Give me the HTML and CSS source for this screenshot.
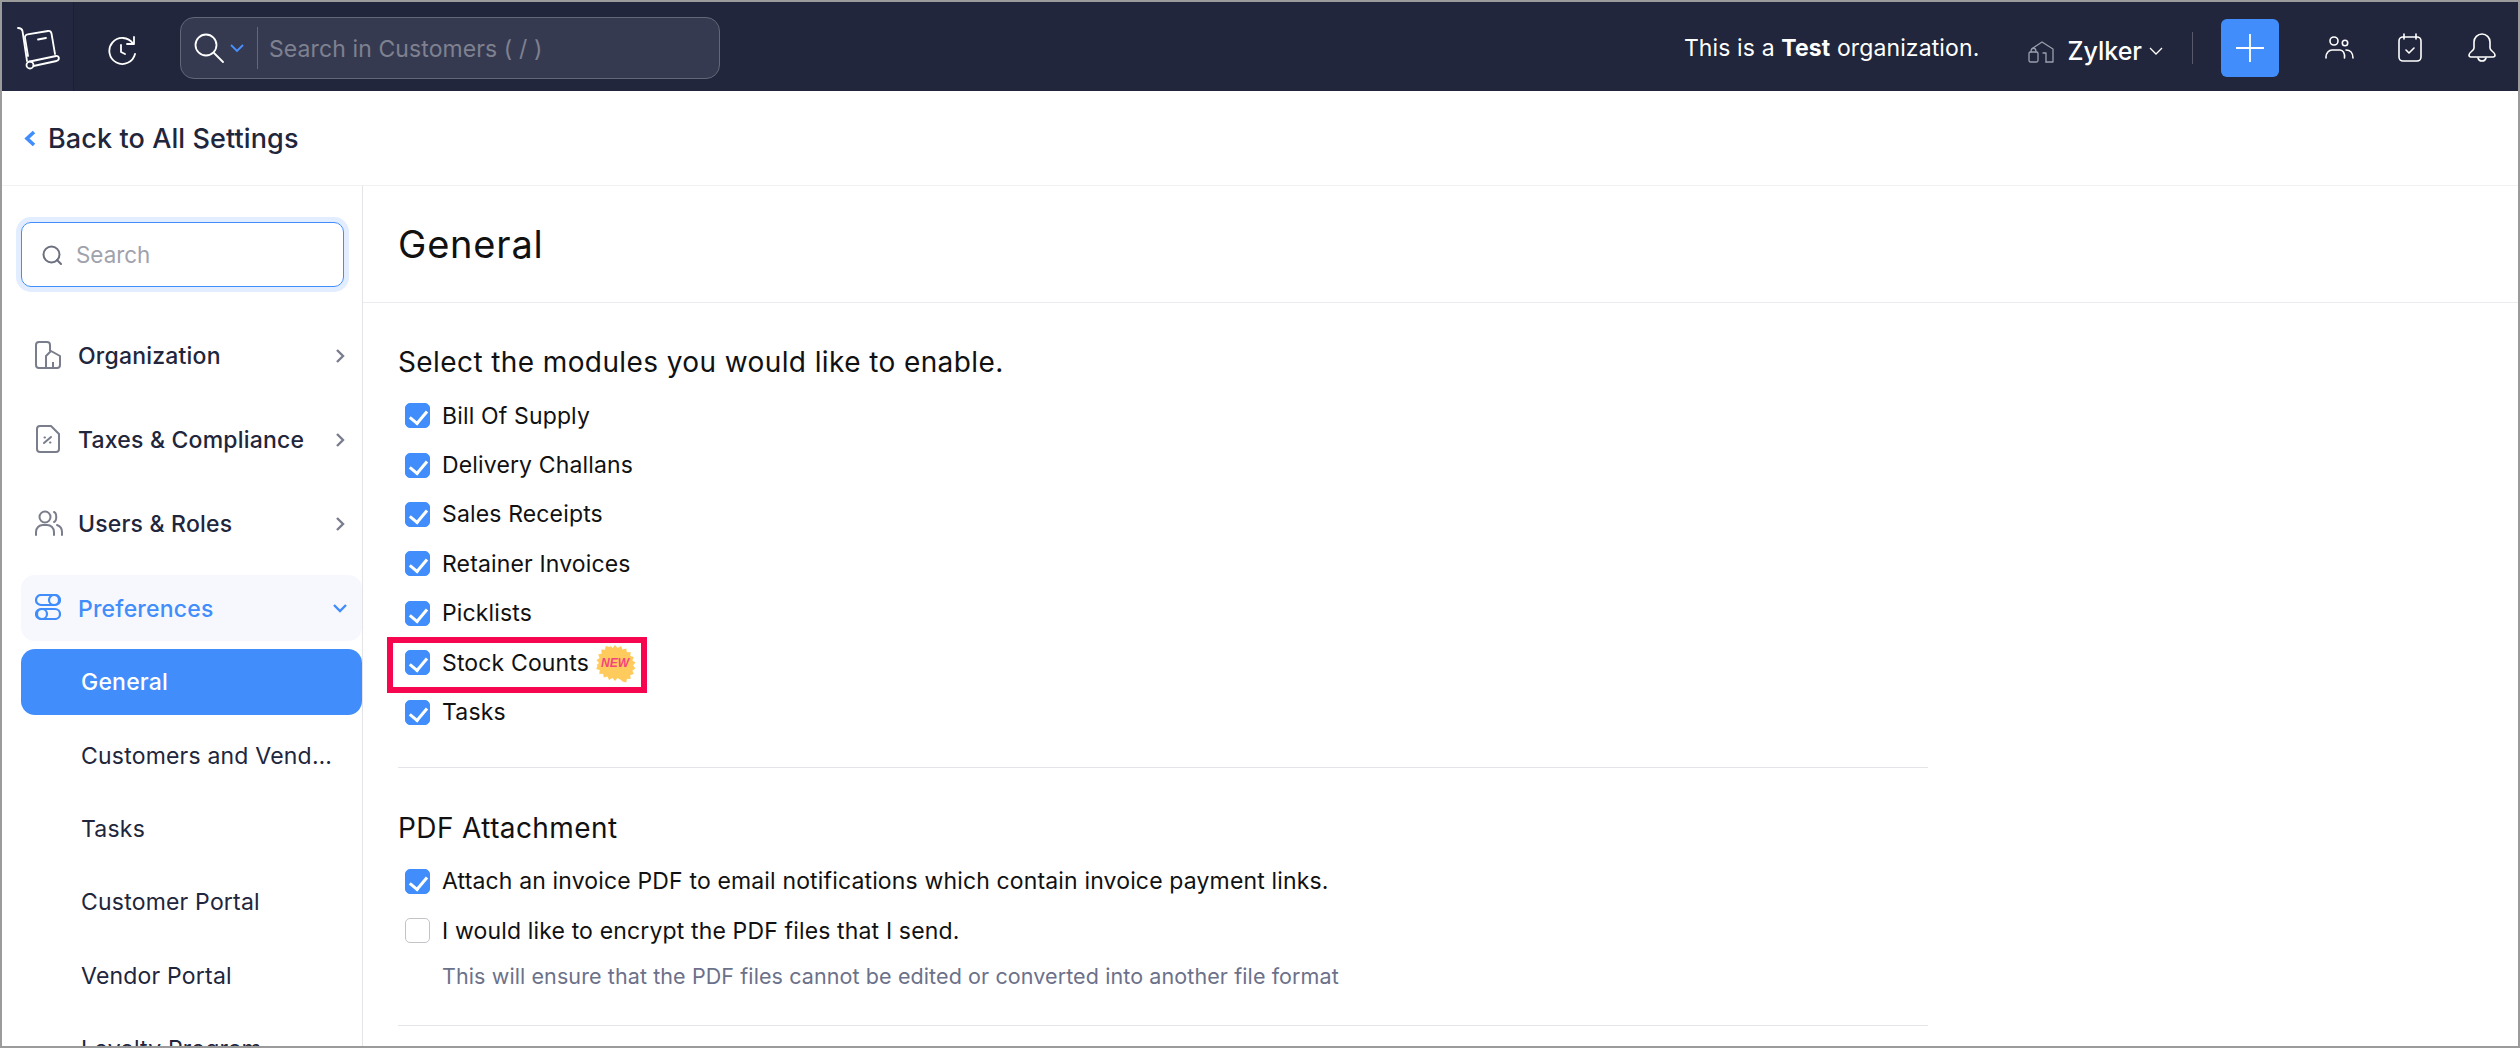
FILE: index.html
```html
<!DOCTYPE html>
<html lang="en">
<head>
<meta charset="utf-8">
<title>General Settings</title>
<link rel="stylesheet" href="styles.css">
</head>
<body>
<div class="frame">
  <header class="topbar">
    <div class="logo-cell">
      <svg width="46" height="44" viewBox="0 0 46 44" fill="none" stroke="#fff" stroke-width="1.800" stroke-linecap="round" stroke-linejoin="round"><path d="M2 2c2.500 0 4 1 4.500 3L11 35"/><circle cx="14" cy="39" r="3.500"/><path d="M14 35.500L40 30c3.500-.5 4 4 .5 5L17.500 40"/><path d="M12 30L9 12c-.3-2 1-3.500 2.500-3.700L32 5c2-.3 3 .5 3.500 2.500L39 28"/><path d="M22 13.500l8-1.500"/></svg>
    </div>
    <div class="history">
      <svg width="30" height="30" viewBox="0 0 30 30" fill="none" stroke="#fff" stroke-width="1.800" stroke-linecap="round" stroke-linejoin="round"><path d="M26 8.500A13 13 0 1 0 28 19"/><path d="M27 2v7h-7"/><path d="M14 10v7l4 2"/></svg>
    </div>
    <div class="global-search">
      <svg class="gs-lens" width="30" height="30" viewBox="0 0 30 30" fill="none" stroke="#fff" stroke-width="1.800" stroke-linecap="round"><circle cx="12" cy="12" r="10.500"/><path d="M20 20l9 9"/></svg>
      <svg class="gs-caret" width="14" height="9" viewBox="0 0 14 9" fill="none" stroke="#4a90ff" stroke-width="1.800"><path d="M1 1l6 6 6-6"/></svg>
      <span class="gs-sep"></span>
      <span class="gs-text">Search in Customers ( / )</span>
    </div>
    <div class="org-note">This is a <b>Test</b> organization.</div>
    <svg class="org-house" width="26" height="22" viewBox="0 0 26 22" fill="none" stroke="#9aa0ae" stroke-width="1.300" stroke-linejoin="round" stroke-linecap="round"><path d="M5 7l9-6 11 7v13h-7"/><rect x="1" y="11" width="9" height="10" rx="1.500"/><path d="M3 11c0-5 5-5 5 0"/><path d="M15 12h3v9"/></svg>
    <div class="org-name">Zylker</div>
    <svg class="org-caret" width="14" height="8" viewBox="0 0 14 8" fill="none" stroke="#fff" stroke-width="1.300"><path d="M1 1l6 6 6-6"/></svg>
    <span class="top-sep"></span>
    <div class="plus-btn">
      <svg width="28" height="28" viewBox="0 0 28 28" stroke="#fff" stroke-width="1.800"><path d="M14 0v28M0 14h28"/></svg>
    </div>
    <svg class="top-icon users" width="29" height="24" viewBox="0 0 29 24" fill="none" stroke="#fff" stroke-width="1.600" stroke-linecap="round"><circle cx="9" cy="5" r="4"/><circle cx="20" cy="7" r="2.700"/><path d="M1 22v-1c0-4 3-7 6-7h8c3 0 5 3 4.500 8"/><path d="M21 14c4 0 7 3 7 8"/></svg>
    <svg class="top-icon cal" width="24" height="29" viewBox="0 0 24 29" fill="none" stroke="#fff" stroke-width="1.600" stroke-linecap="round" stroke-linejoin="round"><rect x="1" y="4" width="22" height="24" rx="4"/><path d="M6 1v5M18 1v5M8 17l3 3 5-5"/></svg>
    <svg class="top-icon bell" width="28" height="30" viewBox="0 0 28 30" fill="none" stroke="#fff" stroke-width="1.600" stroke-linecap="round" stroke-linejoin="round"><path d="M6 15V9a8 8 0 0 1 16 0v6c0 3 5 4 5 7 0 1-1 2-2 2H3c-1 0-2-1-2-2 0-3 5-4 5-7z"/><path d="M10 25c1 4 7 4 8 0"/></svg>
  </header>

  <div class="backrow">
    <svg width="12" height="17" viewBox="0 0 12 17" fill="none" stroke="#408dfb" stroke-width="3.600"><path d="M10 2L3 8.500l7 6.500"/></svg>
    <span>Back to All Settings</span>
  </div>

  <div class="body-row">
    <aside class="sidebar">
      <div class="side-search">
        <svg width="20" height="20" viewBox="0 0 20 20" fill="none" stroke="#6b6f7f" stroke-width="2" stroke-linecap="round"><circle cx="9.500" cy="9.500" r="8"/><path d="M15 15l4 4"/></svg>
        <span>Search</span>
      </div>
      <nav class="nav">
        <div class="nav-item">
          <svg class="nav-icon" width="26" height="28" viewBox="0 0 26 28" fill="none" stroke="#7a7d8c" stroke-width="2" stroke-linejoin="round"><path d="M11 27H4a3 3 0 0 1-3-3V4a3 3 0 0 1 3-3h8a3 3 0 0 1 3 3v6"/><path d="M11 27V15l5-5 9 5v9a3 3 0 0 1-3 3z"/><path d="M18 27v-6"/></svg>
          <span>Organization</span>
          <svg class="nav-chev" width="9" height="14" viewBox="0 0 9 14" fill="none" stroke="#7a7d8c" stroke-width="2.400"><path d="M1 1l6 6-6 6"/></svg>
        </div>
        <div class="nav-item">
          <svg class="nav-icon" width="26" height="28" viewBox="0 0 26 28" fill="none" stroke="#7a7d8c" stroke-width="2" stroke-linejoin="round" stroke-linecap="round"><path d="M5 1h11l8 8v15a3 3 0 0 1-3 3H5a3 3 0 0 1-3-3V4a3 3 0 0 1 3-3z"/><path d="M9 18l7-6M9.500 12.500h.5M15 17.500h.5"/></svg>
          <span>Taxes &amp; Compliance</span>
          <svg class="nav-chev" width="9" height="14" viewBox="0 0 9 14" fill="none" stroke="#7a7d8c" stroke-width="2.400"><path d="M1 1l6 6-6 6"/></svg>
        </div>
        <div class="nav-item">
          <svg class="nav-icon" width="28" height="26" viewBox="0 0 28 26" fill="none" stroke="#7a7d8c" stroke-width="2" stroke-linecap="round"><circle cx="10" cy="7" r="5.500"/><path d="M19 2c3 1 3 9 0 10"/><path d="M1 25v-3c0-4 3-7 7-7h4c4 0 7 3 7 7v3"/><path d="M22 15c3 1 5 3 5 7v3"/></svg>
          <span>Users &amp; Roles</span>
          <svg class="nav-chev" width="9" height="14" viewBox="0 0 9 14" fill="none" stroke="#7a7d8c" stroke-width="2.400"><path d="M1 1l6 6-6 6"/></svg>
        </div>
        <div class="nav-item nav-open">
          <svg class="nav-icon" width="26" height="26" viewBox="0 0 26 26" fill="none" stroke="#408dfb" stroke-width="2.200"><rect x="1" y="1" width="24" height="10" rx="5"/><circle cx="19" cy="6" r="5"/><rect x="1" y="15" width="24" height="10" rx="5"/><circle cx="7" cy="20" r="5"/></svg>
          <span>Preferences</span>
          <svg class="nav-chev down" width="14" height="9" viewBox="0 0 14 9" fill="none" stroke="#408dfb" stroke-width="2.400"><path d="M1 1l6 6 6-6"/></svg>
        </div>
        <div class="sub-item sub-active">General</div>
        <div class="sub-item sub-first"><span class="ellip">Customers and Vendors</span></div>
        <div class="sub-item">Tasks</div>
        <div class="sub-item">Customer Portal</div>
        <div class="sub-item">Vendor Portal</div>
        <div class="sub-item">Loyalty Program</div>
      </nav>
    </aside>

    <main class="content">
      <div class="page-head"><h1>General</h1></div>
      <div class="page-body">
        <h2 class="sec-first">Select the modules you would like to enable.</h2>
        <label class="row"><span class="cb on"></span>Bill Of Supply</label>
        <label class="row"><span class="cb on"></span>Delivery Challans</label>
        <label class="row"><span class="cb on"></span>Sales Receipts</label>
        <label class="row"><span class="cb on"></span>Retainer Invoices</label>
        <label class="row"><span class="cb on"></span>Picklists</label>
        <label class="row"><span class="cb on"></span>Stock Counts
          <span class="badge">
            <svg width="36" height="36" viewBox="0 0 36 36"><path fill="#ffcb5c" d="M18 0l2.500 3 3.500-2 1.500 3.500 3.800-1 .6 3.800 3.800-.2-.4 3.800 3.500 1-1.400 3.500 3.100 2.100-2.500 3 2.500 3-3.100 2.100 1.400 3.500-3.500 1 .4 3.800-3.800-.2-.6 3.800-3.800-1L24 35l-3.500-2L18 36l-2.500-3-3.500 2-1.500-3.500-3.800 1-.6-3.800-3.800.2.400-3.800-3.500-1 1.400-3.500L-.5 20l2.500-2-2.500-3 3.100-2.100L1.200 9.400l3.500-1-.4-3.800 3.800.2.600-3.800 3.800 1L14 1l1.500 2z"/></svg>
            <i>NEW</i>
          </span>
          <span class="highlight"></span>
        </label>
        <label class="row"><span class="cb on"></span>Tasks</label>
        <hr class="rule rule-a">
        <h2 class="sec-pdf">PDF Attachment</h2>
        <label class="row"><span class="cb on"></span>Attach an invoice PDF to email notifications which contain invoice payment links.</label>
        <label class="row"><span class="cb"></span>I would like to encrypt the PDF files that I send.</label>
        <p class="help">This will ensure that the PDF files cannot be edited or converted into another file format</p>
        <hr class="rule rule-b">
      </div>
    </main>
  </div>
</div>
</body>
</html>
```

FILE: styles.css
```css
* { box-sizing: border-box; }
html, body { margin: 0; height: 100%; overflow: hidden; background: #fff; }
body { font-family: Inter, "Liberation Sans", sans-serif; color: #21263c; }

.frame { width: 2520px; height: 1048px; border: 2px solid #9b9b9b; overflow: hidden; display: flex; flex-direction: column; background: #fff; }

.topbar { height: 89px; flex: none; background: #21263c; display: flex; align-items: center; color: #fff; }
.logo-cell { width: 72px; height: 100%; flex: none; background: #232840; border-right: 1px solid #1c2033; border-top-left-radius: 8px; display: flex; align-items: center; padding: 3px 0 0 14px; }
.history { width: 106px; flex: none; display: flex; padding-left: 33px; margin-top: 7px; }
.global-search { width: 540px; height: 62px; flex: none; margin-top: 3px; background: #363a50; border: 1px solid #63677a; border-radius: 14px; display: flex; align-items: center; padding-left: 13px; }
.gs-lens { flex: none; }
.gs-caret { margin-left: 6px; flex: none; }
.gs-sep { width: 1px; height: 42px; background: #63677a; margin-left: 13px; }
.gs-text { margin-left: 11px; margin-top: 1px; font-size: 23px; letter-spacing: .1px; color: #7e8190; }
.org-note { margin-left: auto; font-size: 23px; letter-spacing: .12px; color: #fff; margin-top: 3px; }
.org-house { margin-left: 49px; flex: none; margin-top: 10px; }
.org-name { margin-left: 13px; font-size: 25px; font-weight: 500; margin-top: 8px; }
.org-caret { margin-left: 7px; flex: none; margin-top: 8px; }
.top-sep { width: 1px; height: 32px; background: #565a6c; margin-left: 29px; margin-top: 3px; }
.plus-btn { width: 58px; height: 58px; flex: none; border-radius: 6px; background: #408dfb; margin-left: 28px; margin-top: 3px; display: flex; align-items: center; justify-content: center; }
.top-icon { flex: none; margin-top: 2px; }
.users { margin-left: 46px; }
.cal { margin-left: 44px; }
.bell { margin-left: 46px; margin-right: 22px; }

.backrow { height: 94px; flex: none; display: flex; align-items: center; gap: 12px; padding-left: 22px; font-size: 27px; letter-spacing: .1px; font-weight: 500; }

.body-row { flex: 1; display: flex; min-height: 0; }
.sidebar { width: 361px; flex: none; border-right: 1px solid #e4e4e8; border-top: 1px solid #f2f2f4; padding-top: 36px; }
.side-search { width: 323px; height: 65px; margin-left: 19px; border: 1px solid #408dfb; border-radius: 10px; box-shadow: 0 0 0 5px #e2edff; display: flex; align-items: center; padding-left: 20px; gap: 14px; font-size: 22.400px; color: #9fa2ad; }
.nav { margin-top: 35px; }
.nav-item { height: 66px; margin: 0 0 18.400px 19px; display: flex; align-items: center; padding: 1px 0 0 15px; font-size: 23px; letter-spacing: .2px; font-weight: 500; position: relative; border-radius: 14px; }
.nav-item .nav-icon { position: absolute; left: 14px; top: 19px; }
.nav-item span { margin-left: 42px; }
.nav-chev { margin-left: auto; margin-right: 17px; }
.nav-chev.down { margin-right: 15px; }
.nav-open { background: #f6f8fd; color: #408dfb; margin-bottom: 8px; }
.sub-item { height: 66px; margin: 0 0 7.400px 19px; padding: 0 0 0 60px; display: flex; align-items: center; font-size: 23px; letter-spacing: .2px; }
.sub-active { background: #408dfb; color: #fff; font-weight: 500; border-radius: 14px; }
.ellip { display: block; width: 252px; white-space: nowrap; overflow: hidden; text-overflow: ellipsis; }

.content { flex: 1; min-width: 0; }
.page-head { height: 118px; border-top: 1px solid #f2f2f4; border-bottom: 1px solid #ececf0; display: flex; align-items: center; padding-left: 35px; }
h1 { margin: 0; font-size: 38px; letter-spacing: .8px; font-weight: 400; color: #111; }
.page-body { padding-left: 35px; width: 1566px; }
h2 { margin: 0; font-size: 28px; letter-spacing: .4px; font-weight: 400; color: #111; line-height: 36px; }
.sec-first { margin-top: 41px; margin-bottom: 11px; }
.row { height: 49.400px; display: flex; align-items: center; padding-left: 7px; font-size: 23px; letter-spacing: .15px; color: #111; position: relative; }
.cb { width: 25px; height: 25px; flex: none; margin-right: 12px; border-radius: 5px; border: 1px solid #c4c4c8; background: #fff; position: relative; }
.cb.on { background: #408dfb; border-color: #408dfb; }
.cb.on::after { content: ""; position: absolute; left: 7px; top: 3px; width: 8px; height: 14px; border: solid #fff; border-width: 0 3px 3px 0; transform: rotate(40deg); }
.badge { margin-left: 8px; width: 36px; height: 36px; position: relative; display: block; flex: none; }
.badge svg { display: block; overflow: visible; }
.badge i { position: absolute; left: 0; right: 0; top: 11px; text-align: center; font-size: 12px; line-height: 14px; font-weight: 700; font-style: italic; color: #f4457f; font-family: "Liberation Sans", sans-serif; letter-spacing: 0; }
.highlight { position: absolute; left: -11px; top: -1px; width: 260px; height: 56px; border: 6px solid #f5064f; pointer-events: none; }
.rule { border: 0; height: 1px; background: #e4e4e8; margin: 0; width: 1530px; }
.rule-a { margin-top: 30px; }
.sec-pdf { margin-top: 42px; margin-bottom: 11px; }
.help { margin: 5px 0 0 44px; font-size: 21.500px; letter-spacing: .1px; line-height: 30px; color: #6c718a; }
.rule-b { margin-top: 34px; }
```
